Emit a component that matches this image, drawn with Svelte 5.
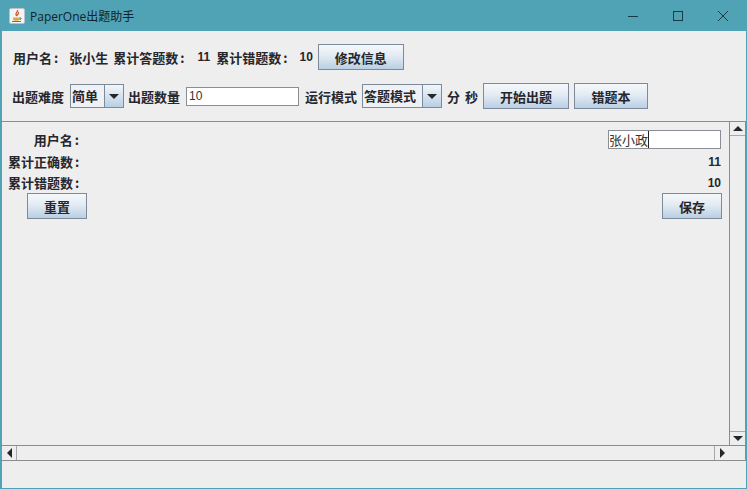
<script>
let username = '张小政';
const level = '简单';
const mode = '答题模式';
</script>

{#snippet colon()}<span class="colon">:</span>{/snippet}

<div class="window">
	<header class="titlebar">
		<svg class="app-icon" width="16" height="16" viewBox="0 0 16 16">
			<rect x="0.5" y="0.5" width="15" height="15" rx="1.5" fill="#f4f4f4" stroke="#b9c3c9" />
			<path d="M8.5 2c1 1.5-2 2.5-1.5 4.5.2.8.8 1 1 1.5-.2-1.5 2.5-2.5 1.5-4" fill="none" stroke="#d8552a" stroke-width="1.3" />
			<path d="M4 9.5h6.5v1.5c0 1.2-1 1.7-2 1.7H6c-1 0-2-.5-2-1.7z" fill="#e8a33d" />
			<path d="M3 13.5h9" stroke="#4a76a8" stroke-width="1" />
			<path d="M10.5 10h1.5v1.2h-1.5" fill="none" stroke="#4a76a8" />
		</svg>
		<span class="title">PaperOne出题助手</span>
		<div class="controls">
			<svg width="12" height="12" viewBox="0 0 12 12"><path d="M1 6.5h10" stroke="#1c3a44" /></svg>
			<svg width="12" height="12" viewBox="0 0 12 12"><rect x="1.5" y="1.5" width="9" height="9" fill="none" stroke="#1c3a44" /></svg>
			<svg width="12" height="12" viewBox="0 0 12 12"><path d="M1 1l10 10M11 1L1 11" stroke="#1c3a44" /></svg>
		</div>
	</header>

	<div class="content">
		<div class="row info">
			<span>用户名{@render colon()}</span>
			<span class="name">张小生</span>
			<span>累计答题数{@render colon()}</span>
			<span class="num first">11</span>
			<span>累计错题数{@render colon()}</span>
			<span class="num second">10</span>
			<button class="btn edit">修改信息</button>
		</div>

		<div class="row config">
			<span>出题难度</span>
			<div class="combo small">
				<span class="combo-value">{level}</span>
				<span class="combo-arrow"><i class="tri down"></i></span>
			</div>
			<span>出题数量</span>
			<input class="count" type="text" value="10" />
			<span>运行模式</span>
			<div class="combo wide">
				<span class="combo-value">{mode}</span>
				<span class="combo-arrow"><i class="tri down"></i></span>
			</div>
			<span class="unit">分</span>
			<span class="unit">秒</span>
			<button class="btn start">开始出题</button>
			<button class="btn wrong">错题本</button>
		</div>

		<div class="scrollpane">
			<div class="view-row-wrap">
				<div class="view">
					<div class="line first-line">
						<span class="label">用户名{@render colon()}</span>
						<div class="name-input"><span class="caret">{username}</span></div>
					</div>
					<div class="line">
						<span class="label">累计正确数{@render colon()}</span>
						<span class="val">11</span>
					</div>
					<div class="line">
						<span class="label">累计错题数{@render colon()}</span>
						<span class="val">10</span>
					</div>
					<div class="line actions">
						<button class="btn reset">重置</button>
						<button class="btn save">保存</button>
					</div>
				</div>
				<div class="vbar">
					<span class="sb-btn v top"><i class="tri up"></i></span>
					<span class="track"></span>
					<span class="sb-btn v bottom"><i class="tri down"></i></span>
				</div>
			</div>
			<div class="hbar">
				<span class="sb-btn h left"><i class="tri leftward"></i></span>
				<span class="track"></span>
				<span class="sb-btn h right"><i class="tri rightward"></i></span>
				<span class="corner"></span>
			</div>
		</div>
	</div>
</div>

<style>
	:global(body) { margin: 0; background: #eeeeee; }
	.window { width: 747px; height: 489px; box-sizing: border-box; display: flex; flex-direction: column; border: 1px solid #4fa3b5; border-top: none; border-left-width: 2px; background: #eeeeee; font: bold 13px "Noto Sans CJK SC", "Liberation Sans", sans-serif; color: #26262c; }
	.titlebar { height: 31px; flex: none; margin-left: -2px; margin-right: -1px; padding-left: 9px; display: flex; align-items: center; background: #4fa3b5; font: 12px "Open Sans", "Noto Sans CJK SC", sans-serif; color: #10222a; }
	.app-icon { margin-right: 5px; }
	.controls { margin-left: auto; display: flex; gap: 33px; padding-right: 18px; }
	.controls svg { display: block; }
	.content { flex: 1; display: flex; flex-direction: column; min-height: 0; }
	.row { display: flex; align-items: center; white-space: nowrap; }
	.colon { margin-left: 2px; margin-right: 1px; }
	.info { height: 26px; margin-top: 13px; padding-left: 11px; }
	.name { margin-left: 10px; margin-right: 5px; }
	.num { font-family: "Liberation Sans", sans-serif; font-size: 12px; }
	.num.first { margin-left: 12px; margin-right: 6px; }
	.num.second { margin-left: 11px; margin-right: 5px; }
	.config { height: 26px; margin-top: 13px; padding-left: 10px; }
	.btn { box-sizing: border-box; height: 26px; padding: 0; border: 1px solid #7d8a99; border-radius: 0; background: linear-gradient(#f4f8fb 0%, #e3ebf3 45%, #b9cfe4 100%); font: bold 13px "Noto Sans CJK SC", sans-serif; color: #26262c; }
	.edit { width: 86px; }
	.start { width: 86px; margin-left: 5px; }
	.wrong { width: 74px; margin-left: 5px; }
	.combo { box-sizing: border-box; height: 24px; display: flex; border: 1px solid #7d8a99; background: #eef1f6; }
	.combo.small { width: 54px; margin: 0 4px 0 6px; }
	.combo.wide { width: 80px; margin: 0 5px; }
	.combo-value { flex: 1; padding-left: 1px; line-height: 22px; }
	.combo-arrow { width: 18px; flex: none; border-left: 1px solid #7d8a99; display: flex; align-items: center; justify-content: center; background: linear-gradient(#f2f6fa, #b9cfe4); }
	.tri { display: block; width: 0; height: 0; border-style: solid; border-color: transparent; }
	.tri.down { border-width: 5px 5px 0 5px; border-top-color: #23262b; }
	.tri.up { border-width: 0 5px 5px 5px; border-bottom-color: #23262b; }
	.tri.leftward { border-width: 5px 5px 5px 0; border-right-color: #23262b; }
	.tri.rightward { border-width: 5px 0 5px 5px; border-left-color: #23262b; }
	.count { box-sizing: border-box; width: 113px; height: 19px; margin: 0 6px; padding: 0 2px; border: 1px solid #8a8f96; background: #fff; font: 12px "Liberation Sans", sans-serif; color: #333; outline: none; }
	.unit + .unit { margin-left: 5px; }
	.scrollpane { margin: 12px 0 27px 0; flex: 1; min-height: 0; display: flex; flex-direction: column; border-top: 1px solid #8c8c8c; border-bottom: 1px solid #8c8c8c; border-right: 1px solid #8c8c8c; }
	.view-row-wrap { flex: 1; min-height: 0; display: flex; }
	.view { flex: 1; padding: 7px 7px 0 6px; }
	.line { display: flex; justify-content: space-between; align-items: center; height: 21px; }
	.first-line { height: 20px; margin-bottom: 2px; }
	.label { width: 72px; text-align: right; white-space: nowrap; }
	.val { font-family: "Liberation Sans", sans-serif; font-size: 12px; padding-right: 1px; }
	.name-input { box-sizing: border-box; width: 113px; height: 19px; margin-right: 1px; border: 1px solid #8a8f96; background: #fff; font: 13px/17px "Noto Sans CJK SC", sans-serif; color: #333; }
	.caret { display: inline-block; border-right: 1px solid #222; }
	.actions { height: 26px; padding-left: 19px; }
	.reset, .save { width: 60px; }
	.vbar { width: 15px; flex: none; display: flex; flex-direction: column; border-left: 1px solid #8c8c8c; }
	.hbar { height: 14px; flex: none; display: flex; border-top: 1px solid #8c8c8c; }
	.track { flex: 1; background: #eeeeee; }
	.sb-btn { flex: none; display: flex; align-items: center; justify-content: center; box-sizing: border-box; background: #eeeeee; }
	.sb-btn.v { height: 14px; }
	.sb-btn.top { border-bottom: 1px solid #a8a8a8; }
	.sb-btn.bottom { border-top: 1px solid #a8a8a8; }
	.sb-btn.h { width: 15px; }
	.sb-btn.left { border-right: 1px solid #a8a8a8; }
	.sb-btn.right { border-left: 1px solid #a8a8a8; }
	.corner { width: 16px; flex: none; }
</style>
